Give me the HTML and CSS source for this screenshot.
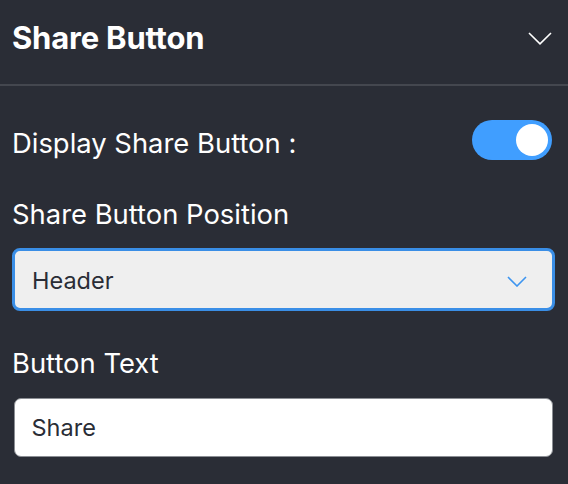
FILE: index.html
```html
<!DOCTYPE html>
<html>
<head>
<meta charset="utf-8">
<link rel="stylesheet" href="styles.css">
</head>
<body>
<div class="panel">
  <div class="panel-head">
    <h2 class="panel-title">Share Button</h2>
    <svg class="head-chevron" width="24" height="13" viewBox="0 0 24 13"><path d="M1 1 L12 11.8 L23 1" fill="none" stroke="#ffffff" stroke-width="1.6"/></svg>
  </div>
  <div class="panel-body">
    <div class="toggle-row">
      <span class="label">Display Share Button :</span>
      <span class="toggle"><span class="knob"></span></span>
    </div>
    <div class="field">
      <div class="label">Share Button Position</div>
      <div class="select">
        <span>Header</span>
        <svg class="select-chevron" width="20" height="11" viewBox="0 0 20 11"><path d="M1 1 L10 10 L19 1" fill="none" stroke="#3d95f0" stroke-width="1.6"/></svg>
      </div>
    </div>
    <div class="field field-2">
      <div class="label">Button Text</div>
      <div class="input">Share</div>
    </div>
  </div>
</div>
</body>
</html>
```
FILE: styles.css
```css
html, body {
  margin: 0;
  padding: 0;
  background: #2a2d36;
  font-family: Inter, "Noto Sans", "Liberation Sans", sans-serif;
  color: #ffffff;
}
.panel {
  width: 568px;
  height: 484px;
}
.panel-head {
  height: 84px;
  border-bottom: 2px solid #44474f;
  display: flex;
  align-items: center;
  justify-content: space-between;
  padding: 0 16px 0 12px;
  box-sizing: border-box;
  height: 86px;
}
.panel-title {
  margin: 0;
  font-size: 31px;
  line-height: 38px;
  font-weight: 700;
  letter-spacing: -0.2px;
  position: relative;
  top: -4px;
}
.head-chevron {
  display: block;
  position: relative;
  top: -4px;
}
.panel-body {
  padding: 0 13px 0 12px;
}
.label {
  font-size: 27.4px;
  line-height: 34px;
}
.toggle-row {
  display: flex;
  align-items: center;
  justify-content: space-between;
  margin-top: 34px;
  height: 40px;
}
.toggle-row .label {
  position: relative;
  top: 3px;
}
.toggle {
  width: 80px;
  height: 40px;
  border-radius: 20px;
  background: #409eff;
  display: flex;
  align-items: center;
  justify-content: flex-end;
  padding-right: 4px;
  box-sizing: border-box;
  margin-right: 3px;
}
.knob {
  width: 32px;
  height: 32px;
  border-radius: 50%;
  background: #ffffff;
}
.field {
  margin-top: 37px;
}
.select {
  margin-top: 17px;
  height: 63px;
  box-sizing: border-box;
  border: 3px solid #3a8ee6;
  border-radius: 8px;
  background: #efefef;
  color: #2a2d36;
  display: flex;
  align-items: center;
  justify-content: space-between;
  padding: 0 25px 0 17px;
  font-size: 23.5px;
  line-height: 30px;
}
.select span {
  position: relative;
  top: 1px;
}
.select-chevron {
  display: block;
  position: relative;
  top: 2px;
}
.field-2 {
  margin-top: 35px;
}
.input {
  margin: 18px 2px 0 1.5px;
  height: 59px;
  box-sizing: border-box;
  border: 1.5px solid #8b8e94;
  border-radius: 7px;
  background: #ffffff;
  color: #2a2d36;
  display: flex;
  align-items: center;
  padding: 1px 17px 0;
  font-size: 23.5px;
  line-height: 30px;
}
```
